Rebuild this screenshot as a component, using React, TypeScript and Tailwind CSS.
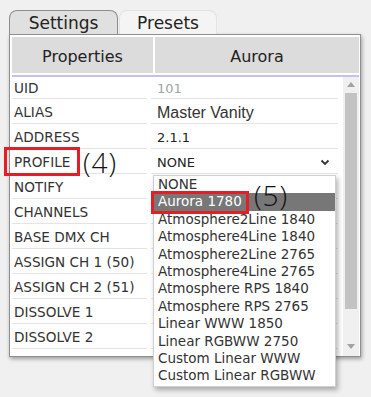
import React from 'react';

interface Row {
  label: string;
  value?: string;
  kind?: 'muted' | 'big' | 'select';
}

const ROWS: Row[] = [
  { label: 'UID', value: '101', kind: 'muted' },
  { label: 'ALIAS', value: 'Master Vanity', kind: 'big' },
  { label: 'ADDRESS', value: '2.1.1' },
  { label: 'PROFILE', value: 'NONE', kind: 'select' },
  { label: 'NOTIFY' },
  { label: 'CHANNELS' },
  { label: 'BASE DMX CH' },
  { label: 'ASSIGN CH 1 (50)' },
  { label: 'ASSIGN CH 2 (51)' },
  { label: 'DISSOLVE 1' },
  { label: 'DISSOLVE 2' },
  { label: 'DISSOLVE 3' },
];

const OPTIONS = [
  'NONE',
  'Aurora 1780',
  'Atmosphere2Line 1840',
  'Atmosphere4Line 1840',
  'Atmosphere2Line 2765',
  'Atmosphere4Line 2765',
  'Atmosphere RPS 1840',
  'Atmosphere RPS 2765',
  'Linear WWW 1850',
  'Linear RGBWW 2750',
  'Custom Linear WWW',
  'Custom Linear RGBWW',
];

const ValueCell: React.FC<{ row: Row }> = ({ row }) => {
  if (row.kind === 'muted') {
    return <span className="text-[13px] text-[#a3a3a3]">{row.value}</span>;
  }
  if (row.kind === 'big') {
    return (
      <span className="font-['Liberation_Sans',sans-serif] text-[16px] text-[#333]">{row.value}</span>
    );
  }
  if (row.kind === 'select') {
    return (
      <div className="flex w-full items-center justify-between pr-[8px]">
        <span className="text-[13px] text-[#222]">{row.value}</span>
        <svg width="10" height="7" viewBox="0 0 10 7">
          <path d="M1.5 1.5 L5 5 L8.5 1.5" fill="none" stroke="#333" strokeWidth="1.8" />
        </svg>
      </div>
    );
  }
  return <span className="text-[13px] text-[#222]">{row.value}</span>;
};

const App: React.FC = () => {
  return (
    <div className="relative w-[371px] h-[397px] overflow-hidden bg-[#f0f0f0] pt-[10px] pl-[9px] font-['DejaVu_Sans',sans-serif]">
      {/* Tabs */}
      <div className="flex h-[24px]">
        <div className="flex w-[109px] items-center justify-center rounded-t-[8px] border border-b-0 border-[#8e8e8e] bg-[#e0e0e0] pt-[1px] text-[17px] leading-none text-[#222]">
          Settings
        </div>
        <div className="ml-[1px] flex w-[98px] items-center justify-center rounded-t-[8px] border border-b-0 border-[#e3e3e3] bg-[#f4f4f4] pt-[1px] text-[17px] leading-none text-[#222]">
          Presets
        </div>
      </div>

      {/* Panel */}
      <div className="flex h-[323px] w-[352px] flex-col border border-[#8f8f8f] bg-white pt-[2px] pl-[2px] pr-[1px] shadow-[1px_2px_4px_rgba(0,0,0,0.35)]">
        <div className="flex h-[36px] gap-[2px] text-[16px] text-[#222]">
          <div className="flex w-[141px] items-center justify-center bg-[#dcdcdc] pt-[3px]">Properties</div>
          <div className="flex flex-1 items-center justify-center bg-[#dcdcdc] pt-[3px]">Aurora</div>
        </div>
        <div className="h-[2px]" />
        <div className="h-[2px] bg-[#c6bef5]" />

        <div className="flex min-h-0 flex-1 overflow-hidden">
          <div className="w-[331px]">
            {ROWS.map((row, i) => (
              <div key={row.label} className={`flex ${i === 0 ? 'h-[22px]' : 'h-[25px]'}`}>
                <div className={`flex w-[135px] items-center border-b border-[#e4e4e4] pl-[2px] text-[13.6px] text-[#333] ${i === 0 ? 'pt-[2px]' : 'pt-[3px]'}`}>
                  {row.label}
                </div>
                <div className="w-[4px]" />
                <div className={`flex w-[187px] items-center border-b border-[#e4e4e4] pl-[6px] ${i === 0 ? 'pt-[2px]' : 'pt-[3px]'}`}>
                  {row.value && <ValueCell row={row} />}
                </div>
              </div>
            ))}
          </div>

          {/* Scrollbar */}
          <div className="flex w-[16px] flex-col items-center bg-[#f0f0f0]">
            <svg width="8" height="5" viewBox="0 0 8 5" className="mt-[5px]">
              <path d="M0 5 L4 0 L8 5 Z" fill="#a3a3a3" />
            </svg>
            <div className="mt-[6px] h-[216px] w-[12px] bg-[#c3c3c3]" />
            <div className="flex-1" />
            <svg width="8" height="5" viewBox="0 0 8 5" className="mb-[7px]">
              <path d="M0 0 L8 0 L4 5 Z" fill="#a3a3a3" />
            </svg>
          </div>
        </div>
      </div>

      {/* Open dropdown list */}
      <div className="absolute left-[153px] top-[175px] w-[183px] border border-[#d0d0d0] bg-white pb-[1px] shadow-[2px_3px_5px_rgba(0,0,0,0.3)]">
        {OPTIONS.map((opt, i) => (
          <div
            key={opt}
            className={`h-[17.4px] pl-[4px] text-[13.5px] leading-[17.4px] ${i === 1 ? 'bg-[#777] text-white' : 'text-[#333]'}`}
          >
            {opt}
          </div>
        ))}
      </div>

      {/* Annotations */}
      <div className="absolute left-[4px] top-[147px] h-[29px] w-[76px] border-[3px] border-[#e51e25]" />
      <div className="absolute left-[83px] top-[146px] font-['Open_Sans',sans-serif] text-[28px] font-light leading-[32px] tracking-[1px] text-[#111]">
        (4)
      </div>
      <div className="absolute left-[254px] top-[179px] font-['Open_Sans',sans-serif] text-[28px] font-light leading-[32px] tracking-[1px] text-[#111]">
        (5)
      </div>
      <div className="absolute left-[151px] top-[191px] h-[23px] w-[98px] border-[3px] border-[#e51e25]" />
    </div>
  );
};

export default App;
